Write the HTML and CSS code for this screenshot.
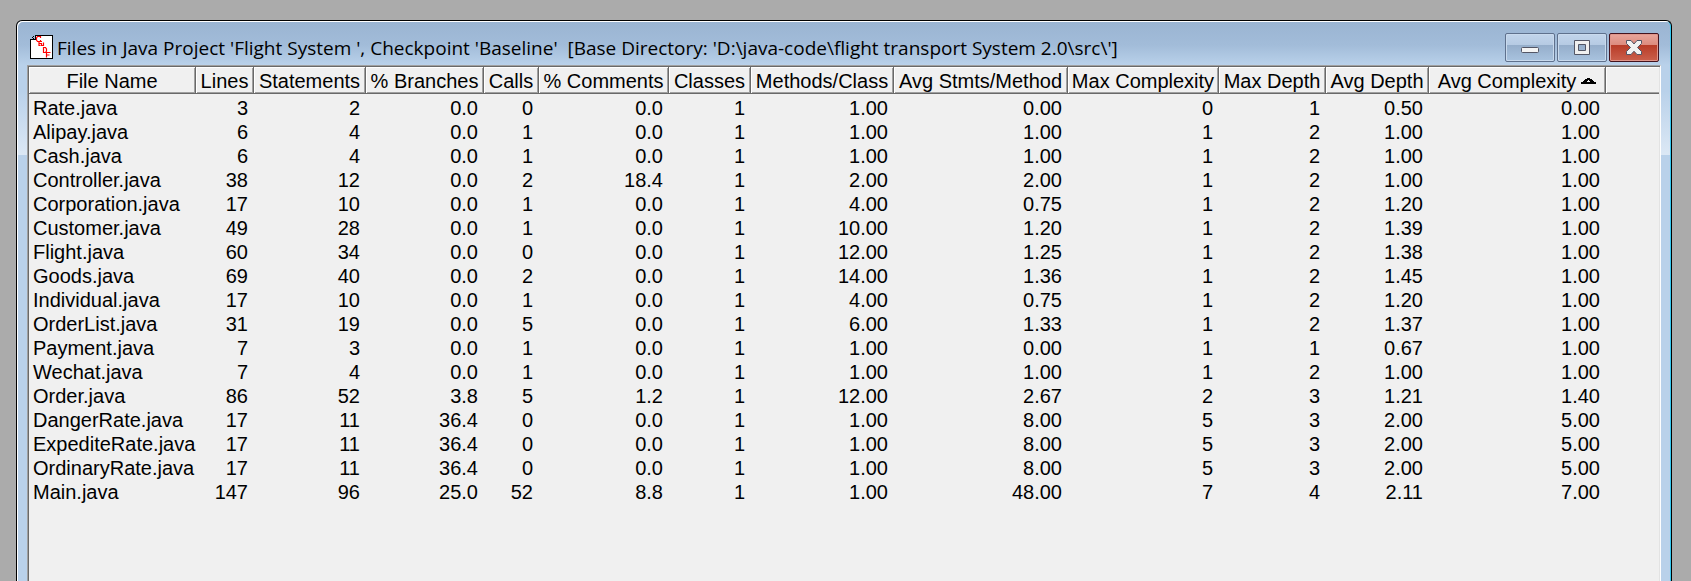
FILE: index.html
```html
<!DOCTYPE html>
<html lang="en">
<head>
<meta charset="utf-8">
<title>Files in Java Project</title>
<link rel="stylesheet" href="styles.css">
</head>
<body>
<main class="window">
<header class="titlebar">
<svg class="app-icon" width="24" height="24" viewBox="0 0 24 24" aria-hidden="true"><g shape-rendering="crispEdges"><path d="M6 1H22V23H1V5H6Z" fill="#fff"/><path d="M5 0H23V24H0V4H5ZM6 1V5H1V23H22V1Z" fill="#000" fill-rule="evenodd"/><path d="M2 2h1v1H2zM3 1h1v1H3zM3 3h1v1H3z" fill="#000"/></g><path d="M10.500 3V1.500H7.500L6.500 3V5L7.500 6.500H10.500V5M12 6.500H9V10.500H10.500M9 8.500H11M11.500 8V10.500H13.500V7.500M13.500 12.500V17.500H15.500L16.500 16V14L15.500 12.500ZM16.500 22.500V17.500H20.500M16.500 20H19.500" fill="none" stroke="#f00" stroke-width="1.200"/></svg>
<h1 class="title">Files in Java Project 'Flight System ', Checkpoint 'Baseline'&nbsp; [Base Directory: 'D:\java-code\flight transport System 2.0\src\']</h1>
<div class="controls">
<button class="control" type="button" aria-label="Minimize"><svg width="18" height="12" viewBox="0 0 18 12"><rect x=".5" y="5.500" width="17" height="5" rx="1" fill="#f4f4f4" stroke="#535666"/></svg></button>
<button class="control" type="button" aria-label="Maximize"><svg width="18" height="16" viewBox="0 0 18 16"><path d="M1.500.5h15v14h-15zM5.500 4.500h7v6h-7z" fill="#f0f0f0" fill-rule="evenodd" stroke="#535666"/></svg></button>
<button class="control close" type="button" aria-label="Close"><svg width="18" height="16" viewBox="0 0 18 16"><path d="M1.500.5h4.500l3 3.500 3-3.500h4.500v3L12.500 7.500l4 4v3H12L9 11.200 6 14.500H1.500v-3l4-4-4-4z" fill="#f2f2f2" stroke="#535666" stroke-linejoin="round"/></svg></button>
</div>
</header>
<section class="client">
<table class="files">
<colgroup><col class="w-name"><col class="w-lines"><col class="w-statements"><col class="w-branches"><col class="w-calls"><col class="w-comments"><col class="w-classes"><col class="w-methods"><col class="w-stmts"><col class="w-maxcomplexity"><col class="w-maxdepth"><col class="w-avgdepth"><col class="w-avgcomplexity"><col></colgroup>
<thead><tr><th>File Name</th><th>Lines</th><th>Statements</th><th>% Branches</th><th>Calls</th><th>% Comments</th><th>Classes</th><th>Methods/Class</th><th>Avg Stmts/Method</th><th>Max Complexity</th><th>Max Depth</th><th>Avg Depth</th><th aria-sort="ascending">Avg Complexity<svg class="sort" width="15" height="6" viewBox="0 0 15 6" shape-rendering="crispEdges" aria-hidden="true"><path d="M6 0h3v1h2v1h1v1h1v1h2v2H0V4h2V3h1V2h1V1h2zM7 2v1H6v1h3V3H8V2z" fill="#000" fill-rule="evenodd"/></svg></th><td></td></tr></thead>
<tbody>
<tr><td>Rate.java</td><td>3</td><td>2</td><td>0.0</td><td>0</td><td>0.0</td><td>1</td><td>1.00</td><td>0.00</td><td>0</td><td>1</td><td>0.50</td><td>0.00</td></tr>
<tr><td>Alipay.java</td><td>6</td><td>4</td><td>0.0</td><td>1</td><td>0.0</td><td>1</td><td>1.00</td><td>1.00</td><td>1</td><td>2</td><td>1.00</td><td>1.00</td></tr>
<tr><td>Cash.java</td><td>6</td><td>4</td><td>0.0</td><td>1</td><td>0.0</td><td>1</td><td>1.00</td><td>1.00</td><td>1</td><td>2</td><td>1.00</td><td>1.00</td></tr>
<tr><td>Controller.java</td><td>38</td><td>12</td><td>0.0</td><td>2</td><td>18.4</td><td>1</td><td>2.00</td><td>2.00</td><td>1</td><td>2</td><td>1.00</td><td>1.00</td></tr>
<tr><td>Corporation.java</td><td>17</td><td>10</td><td>0.0</td><td>1</td><td>0.0</td><td>1</td><td>4.00</td><td>0.75</td><td>1</td><td>2</td><td>1.20</td><td>1.00</td></tr>
<tr><td>Customer.java</td><td>49</td><td>28</td><td>0.0</td><td>1</td><td>0.0</td><td>1</td><td>10.00</td><td>1.20</td><td>1</td><td>2</td><td>1.39</td><td>1.00</td></tr>
<tr><td>Flight.java</td><td>60</td><td>34</td><td>0.0</td><td>0</td><td>0.0</td><td>1</td><td>12.00</td><td>1.25</td><td>1</td><td>2</td><td>1.38</td><td>1.00</td></tr>
<tr><td>Goods.java</td><td>69</td><td>40</td><td>0.0</td><td>2</td><td>0.0</td><td>1</td><td>14.00</td><td>1.36</td><td>1</td><td>2</td><td>1.45</td><td>1.00</td></tr>
<tr><td>Individual.java</td><td>17</td><td>10</td><td>0.0</td><td>1</td><td>0.0</td><td>1</td><td>4.00</td><td>0.75</td><td>1</td><td>2</td><td>1.20</td><td>1.00</td></tr>
<tr><td>OrderList.java</td><td>31</td><td>19</td><td>0.0</td><td>5</td><td>0.0</td><td>1</td><td>6.00</td><td>1.33</td><td>1</td><td>2</td><td>1.37</td><td>1.00</td></tr>
<tr><td>Payment.java</td><td>7</td><td>3</td><td>0.0</td><td>1</td><td>0.0</td><td>1</td><td>1.00</td><td>0.00</td><td>1</td><td>1</td><td>0.67</td><td>1.00</td></tr>
<tr><td>Wechat.java</td><td>7</td><td>4</td><td>0.0</td><td>1</td><td>0.0</td><td>1</td><td>1.00</td><td>1.00</td><td>1</td><td>2</td><td>1.00</td><td>1.00</td></tr>
<tr><td>Order.java</td><td>86</td><td>52</td><td>3.8</td><td>5</td><td>1.2</td><td>1</td><td>12.00</td><td>2.67</td><td>2</td><td>3</td><td>1.21</td><td>1.40</td></tr>
<tr><td>DangerRate.java</td><td>17</td><td>11</td><td>36.4</td><td>0</td><td>0.0</td><td>1</td><td>1.00</td><td>8.00</td><td>5</td><td>3</td><td>2.00</td><td>5.00</td></tr>
<tr><td>ExpediteRate.java</td><td>17</td><td>11</td><td>36.4</td><td>0</td><td>0.0</td><td>1</td><td>1.00</td><td>8.00</td><td>5</td><td>3</td><td>2.00</td><td>5.00</td></tr>
<tr><td>OrdinaryRate.java</td><td>17</td><td>11</td><td>36.4</td><td>0</td><td>0.0</td><td>1</td><td>1.00</td><td>8.00</td><td>5</td><td>3</td><td>2.00</td><td>5.00</td></tr>
<tr><td>Main.java</td><td>147</td><td>96</td><td>25.0</td><td>52</td><td>8.8</td><td>1</td><td>1.00</td><td>48.00</td><td>7</td><td>4</td><td>2.11</td><td>7.00</td></tr>
</tbody>
</table>
</section>
</main>
</body>
</html>
```
FILE: styles.css
```css
* { box-sizing: border-box; }

body {
  margin: 0;
  min-height: 100vh;
  padding: 20px 19px 0 16px;
  display: flex;
  flex-direction: column;
  background: #ababab;
  color: #000;
  font: 20px/24px "Liberation Sans", Arial, sans-serif;
}

.window {
  flex: 1;
  display: flex;
  flex-direction: column;
  border: 1px solid #000;
  border-bottom: 0;
  border-radius: 6px 6px 0 0;
  padding: 0 10px;
  background: linear-gradient(#9ab4d2 0, #a2bcd9 24px, #b9d1ea 44px, #b9d1ea 70px, #dce8f5 134px, #b9d1ea 134px);
  box-shadow: inset 1px 1px 0 #fff, inset -1px 0 0 #35c8f0;
}

.titlebar {
  height: 44px;
  padding: 12px 2px 0 3px;
  display: flex;
  align-items: flex-start;
  gap: 3px;
}

.app-icon { flex: none; margin-top: 2px; }

.title {
  flex: 1;
  margin: 0;
  font: 400 19px/30px "Open Sans", sans-serif;
  white-space: nowrap;
}

.controls { display: flex; gap: 2px; }

.control {
  width: 50px;
  height: 29px;
  padding: 0;
  display: flex;
  align-items: center;
  justify-content: center;
  border: 1px solid #5f718d;
  border-radius: 2px;
  background: linear-gradient(#c2d5eb, #b5cae3 42%, #95aecb 42%, #a9c3df);
  box-shadow: inset 0 0 0 1px #c9daed;
}

.close {
  border-color: #43131e;
  background: linear-gradient(#e8a69c, #dc8a7d 42%, #b83c28 42%, #cb604c);
  box-shadow: inset 0 0 0 1px #e0958a;
}

.client {
  flex: 1;
  border: 1px solid;
  border-color: #a0a0a0 #fff #fff #a0a0a0;
  border-bottom: 0;
  background: #f0f0f0;
  box-shadow: inset 1px 1px 0 #696969, inset -1px 0 0 #e3e3e3;
  padding: 1px 1px 0;
}

.files { width: 100%; table-layout: fixed; border-collapse: separate; border-spacing: 0; white-space: nowrap; }
.w-name { width: 167px; }
.w-lines { width: 58px; }
.w-statements { width: 112px; }
.w-branches { width: 118px; }
.w-calls { width: 55px; }
.w-comments { width: 130px; }
.w-classes { width: 82px; }
.w-methods { width: 143px; }
.w-stmts { width: 174px; }
.w-maxcomplexity { width: 151px; }
.w-maxdepth { width: 107px; }
.w-avgdepth { width: 103px; }
.w-avgcomplexity { width: 177px; }

th, thead td {
  height: 27px;
  padding: 2px 0 0;
  font-weight: 400;
  text-align: center;
  border-bottom: 1px solid #696969;
  box-shadow: inset 1px 1px 0 #fff, inset 0 -1px 0 #a0a0a0;
}

th {
  border-right: 1px solid #696969;
  box-shadow: inset 1px 1px 0 #fff, inset -1px -1px 0 #a0a0a0;
}

.sort { margin-left: 5px; vertical-align: 4px; }

tbody td { padding: 0 6px 0 0; text-align: right; }
tbody td:first-child { padding: 0 0 0 4px; text-align: left; }
tbody tr:first-child td { padding-top: 2px; }
```
